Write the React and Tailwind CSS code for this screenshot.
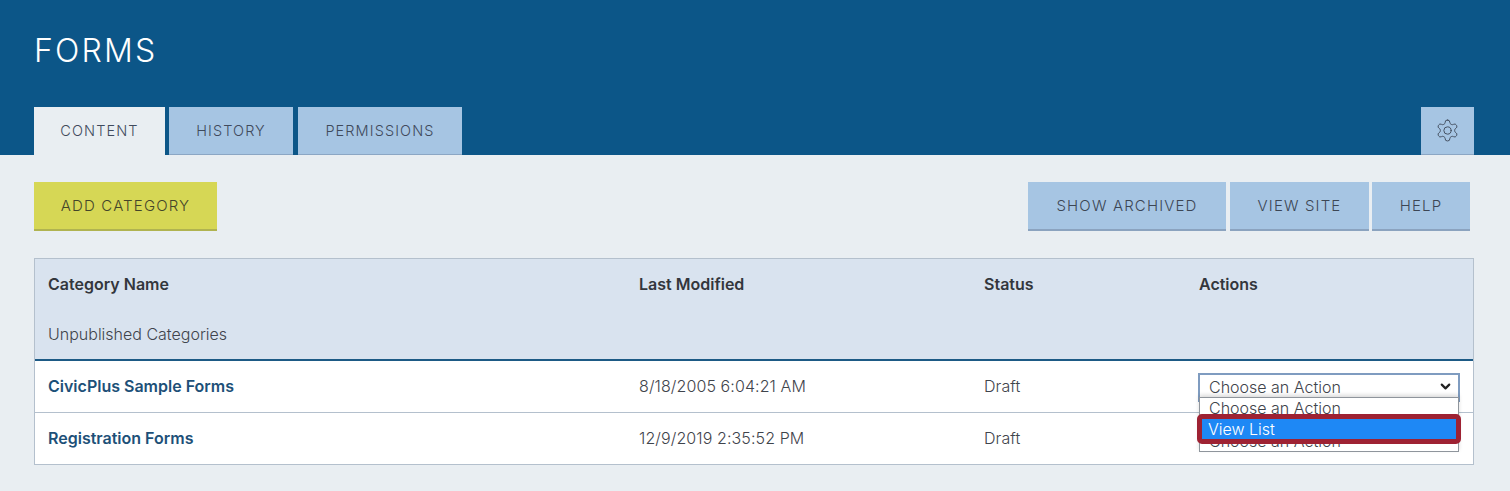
import React from "react";
import { ChevronDown } from "lucide-react";

function Gear() {
  return (
    <svg width="25" height="25" viewBox="0 0 24 24" fill="none" stroke="#3f4a5a" strokeWidth="0.9" strokeLinecap="round" strokeLinejoin="round">
      <path d="M12.22 2h-.44a2 2 0 0 0-2 2v.18a2 2 0 0 1-1 1.73l-.43.25a2 2 0 0 1-2 0l-.15-.08a2 2 0 0 0-2.73.73l-.22.38a2 2 0 0 0 .73 2.73l.15.1a2 2 0 0 1 1 1.72v.51a2 2 0 0 1-1 1.74l-.15.09a2 2 0 0 0-.73 2.73l.22.38a2 2 0 0 0 2.73.73l.15-.08a2 2 0 0 1 2 0l.43.25a2 2 0 0 1 1 1.73V20a2 2 0 0 0 2 2h.44a2 2 0 0 0 2-2v-.18a2 2 0 0 1 1-1.73l.43-.25a2 2 0 0 1 2 0l.15.08a2 2 0 0 0 2.73-.73l.22-.39a2 2 0 0 0-.73-2.73l-.15-.08a2 2 0 0 1-1-1.74v-.5a2 2 0 0 1 1-1.74l.15-.09a2 2 0 0 0 .73-2.73l-.22-.38a2 2 0 0 0-2.73-.73l-.15.08a2 2 0 0 1-2 0l-.43-.25a2 2 0 0 1-1-1.73V4a2 2 0 0 0-2-2z" />
      <circle cx="12" cy="12" r="3.5" />
    </svg>
  );
}

function Btn({ children, className }) {
  return (
    <button className={`h-[49px] pt-[1px] border-b-2 text-[15px] font-light tracking-[1.15px] uppercase text-[#3c4654] ${className}`}>
      {children}
    </button>
  );
}

function Row({ name, date, className }) {
  return (
    <div className={`grid grid-cols-[591px_345px_215px_1fr] pl-[13px] pb-[2px] items-center text-[16px] tracking-[0.1px] font-light text-[#3f444c] ${className}`}>
      <a className="font-semibold text-[16px] tracking-normal text-[#1d5078]">{name}</a>
      <span>{date}</span>
      <span>Draft</span>
    </div>
  );
}

export default function App() {
  return (
    <div className="w-[1510px] h-[491px] overflow-hidden bg-[#e9eef2] font-['Inter',sans-serif]">
      <header className="h-[155px] bg-[#0c5688] px-[34px] flex flex-col">
        <h1 className="h-[107px] pt-[31px] text-[32px] leading-[40px] font-light tracking-[2.2px] text-white">FORMS</h1>
        <div className="flex items-stretch h-[48px] text-[14.5px] font-light tracking-[1.1px] uppercase text-[#3f4a5c]">
          <div className="w-[131px] bg-[#e9eef2] flex items-center justify-center">Content</div>
          <div className="ml-[4px] w-[124px] pt-[1px] bg-[#a6c5e3] border-b border-[#8ba6c4] flex items-center justify-center">History</div>
          <div className="ml-[5px] w-[164px] pt-[1px] bg-[#a6c5e3] border-b border-[#8ba6c4] flex items-center justify-center">Permissions</div>
          <div className="ml-auto mr-[2px] w-[53px] bg-[#a6c5e3] border-b border-[#8ba6c4] flex items-center justify-center">
            <Gear />
          </div>
        </div>
      </header>

      <main className="pl-[34px] pr-[36px] pt-[27px]">
        <div className="flex pr-[4px]">
          <Btn className="w-[183px] bg-[#d6d755] border-[#b0b350] text-[#44452a]">Add Category</Btn>
          <Btn className="ml-auto w-[198px] bg-[#a6c5e3] border-[#8ba3bf]">Show Archived</Btn>
          <Btn className="ml-[4px] w-[139px] bg-[#a6c5e3] border-[#8ba3bf]">View Site</Btn>
          <Btn className="ml-[3px] w-[98px] bg-[#a6c5e3] border-[#8ba3bf]">Help</Btn>
        </div>

        <div className="relative mt-[27px] border border-[#b4c0cd] bg-white">
          <div className="h-[102px] bg-[#d9e3ef] pl-[13px] pt-[13px] border-b-2 border-[#1d5a85]">
            <div className="grid grid-cols-[591px_345px_215px_1fr] text-[16px] font-semibold text-[#33363c] leading-[24px]">
              <span>Category Name</span>
              <span>Last Modified</span>
              <span>Status</span>
              <span>Actions</span>
            </div>
            <div className="mt-[26px] text-[16px] font-light leading-[24px] text-[#3f444c]">Unpublished Categories</div>
          </div>
          <Row name="CivicPlus Sample Forms" date="8/18/2005 6:04:21 AM" className="h-[52px] border-b border-[#b4c0cd]" />
          <Row name="Registration Forms" date="12/9/2019 2:35:52 PM" className="h-[51px]" />

          <div className="absolute left-[1163px] top-[114px] w-[262px] h-[29px] border-2 border-[#7f9cc0] bg-white pl-[9px] pr-[5px] pb-[2px] flex items-center justify-between text-[16px] font-light text-[#3f444c]">
            <span>Choose an Action</span>
            <ChevronDown size={15} strokeWidth={3.5} className="text-[#222]" />
          </div>
          <div className="absolute left-[1164px] top-[138px] w-[260px] h-[55px] border border-[#8f959c] bg-white pl-[9px] text-[16px] font-light leading-[20px] text-[#3f444c] overflow-hidden shadow-[0_-2px_4px_rgba(0,0,0,0.15)]">
            <div>Choose an Action</div>
            <div className="mt-[13px]">Choose an Action</div>
          </div>
          <div className="absolute left-[1162px] top-[155px] w-[264px] h-[30px] rounded-[5px] border-[5px] border-[#9e2233] bg-[#1e88f5] pl-[6px] flex items-center text-[16px] font-light text-white">
            View List
          </div>
        </div>
      </main>
    </div>
  );
}
